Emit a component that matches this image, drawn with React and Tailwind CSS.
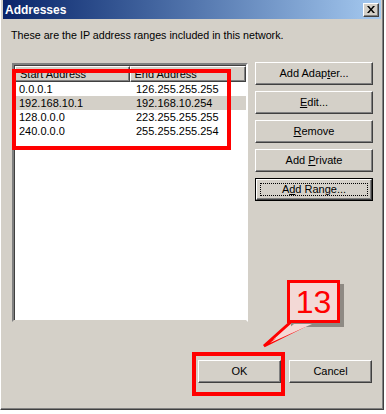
import React from 'react';

const rows = [
  { start: '0.0.0.1', end: '126.255.255.255' },
  { start: '192.168.10.1', end: '192.168.10.254', selected: true },
  { start: '128.0.0.0', end: '223.255.255.255' },
  { start: '240.0.0.0', end: '255.255.255.254' },
];

// raised win2k button bevel
const bevel =
  'border border-t-white border-l-white border-r-[#404040] border-b-[#404040] shadow-[inset_-1px_-1px_0_#808080] bg-[#d4d0c8]';

function Btn({ children, className = '', isDefault = false }) {
  if (isDefault) {
    return (
      <div className={`border border-black ${className}`}>
        <div className={`${bevel} h-full p-[3px]`}>
          <div className="h-full border border-dotted border-black flex items-center justify-center">
            {children}
          </div>
        </div>
      </div>
    );
  }
  return (
    <div className={`${bevel} flex items-center justify-center ${className}`}>{children}</div>
  );
}

function HeaderCell({ children, className = '' }) {
  return (
    <div
      className={`h-[16px] border border-t-white border-l-white border-r-[#404040] border-b-[#404040] shadow-[inset_-1px_-1px_0_#808080] bg-[#d4d0c8] pl-[4px] leading-[14px] overflow-hidden ${className}`}
    >
      {children}
    </div>
  );
}

export default function App() {
  return (
    <div
      className="w-[386px] h-[414px] bg-white text-[11px] text-black"
      style={{ fontFamily: '"Liberation Sans", Arial, sans-serif' }}
    >
      <div className="relative w-[384px] h-[410px] bg-[#d4d0c8] border-l border-l-white border-r border-r-[#404040] border-b border-b-[#404040] shadow-[inset_-1px_-1px_0_#808080] px-[2px] flex flex-col">
        {/* Title bar */}
        <div className="h-[19px] flex items-center justify-between bg-gradient-to-r from-[#0a246a] to-[#a6caf0] pl-[2px] pr-[2px]">
          <span className="text-white font-bold text-[12px] leading-none">Addresses</span>
          <div className="w-[16px] h-[14px] border border-t-white border-l-white border-r-[#404040] border-b-[#404040] shadow-[inset_-1px_-1px_0_#808080] bg-[#d4d0c8] flex items-center justify-center">
            <svg width="8" height="7" viewBox="0 0 8 7">
              <path d="M0 0h2l2 2.5L6 0h2L5 3.5 8 7H6L4 4.5 2 7H0l3-3.5z" fill="#000" />
            </svg>
          </div>
        </div>

        <p className="mt-[10px] ml-[8px] leading-[13px] text-[10.7px]">
          These are the IP address ranges included in this network.
        </p>

        <div className="flex mt-[21px] ml-[9px]">
          {/* list view */}
          <div className="w-[236px] h-[259px] bg-white border-2 border-t-[#808080] border-l-[#808080] border-r-white border-b-[#d4d0c8] shadow-[inset_1px_1px_0_#404040]">
            <div className="flex pl-[1px] pt-[1px]">
              <HeaderCell className="w-[115px]">Start Address</HeaderCell>
              <HeaderCell className="w-[117px]">End Address</HeaderCell>
            </div>
            <div className="pl-[1px]">
              {rows.map((r) => (
                <div
                  key={r.start}
                  className={`flex h-[14px] leading-[14px] w-[231px] ${r.selected ? 'bg-[#d4d0c8]' : ''}`}
                >
                  <span className="w-[116px] pl-[4px]">{r.start}</span>
                  <span className="pl-[5px]">{r.end}</span>
                </div>
              ))}
            </div>
          </div>

          {/* right buttons */}
          <div className="ml-[7px] w-[118px] flex flex-col gap-[6px] -mt-[1px]">
            <Btn className="h-[23px]">
              <span>
                Add Adap<u>t</u>er...
              </span>
            </Btn>
            <Btn className="h-[23px]">
              <span>
                <u>E</u>dit...
              </span>
            </Btn>
            <Btn className="h-[23px]">
              <span>
                <u>R</u>emove
              </span>
            </Btn>
            <Btn className="h-[23px]">
              <span>
                Add <u>P</u>rivate
              </span>
            </Btn>
            <Btn className="h-[23px]" isDefault>
              <span>
                A<u>d</u>d Range...
              </span>
            </Btn>
          </div>
        </div>

        {/* bottom buttons */}
        <div className="flex justify-end gap-[8px] mt-[38px] mr-[9px]">
          <Btn className="w-[83px] h-[23px]">OK</Btn>
          <Btn className="w-[83px] h-[23px]">Cancel</Btn>
        </div>

        {/* annotations */}
        <div className="absolute left-[11px] top-[69px] w-[219px] h-[81px] border-4 border-[#ff0000]" />
        <div className="absolute left-[191px] top-[352px] w-[93px] h-[44px] border-4 border-[#ff0000]" />
        <svg className="absolute left-[255px] top-[315px]" width="70" height="40" viewBox="0 0 70 40">
          <polygon points="36,6 58,6 8,31" fill="#f3d9d6" stroke="#ff0000" strokeWidth="3" strokeLinejoin="miter" />
        </svg>
        <div className="absolute left-[290px] top-[284px] w-[53px] h-[43px] bg-[#8e8a84]" />
        <div className="absolute left-[286px] top-[280px] w-[53px] h-[43px] bg-[#f3d9d6] border-[3px] border-[#ff0000] flex items-center justify-center">
          <span className="text-[#ff0000] text-[32px] leading-none">13</span>
        </div>
        <svg className="absolute left-[255px] top-[315px]" width="70" height="40" viewBox="0 0 70 40">
          <polygon points="38,9 56,9 14,28" fill="#f3d9d6" />
        </svg>
      </div>
    </div>
  );
}
